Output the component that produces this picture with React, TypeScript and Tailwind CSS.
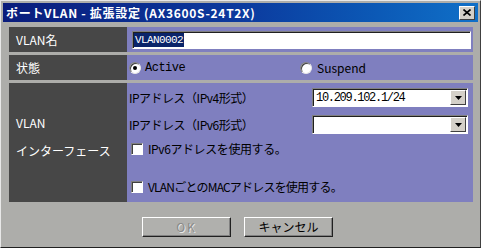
const font = "font-['Noto_Sans_CJK_JP','Noto_Sans',sans-serif]";

function Radio({ checked }: { checked?: boolean }) {
  return (
    <span className="relative inline-block w-[12px] h-[12px] rounded-full bg-white border border-t-[#808080] border-l-[#808080] border-r-[#e8e8e8] border-b-[#e8e8e8] shadow-[inset_1px_1px_0_#404040]">
      {checked && <span className="absolute left-[3px] top-[3px] w-[4px] h-[4px] rounded-full bg-black" />}
    </span>
  );
}

function Check() {
  return (
    <span className="inline-block w-[12px] h-[12px] bg-white border border-t-[#808080] border-l-[#808080] border-r-white border-b-white shadow-[inset_1px_1px_0_#404040]" />
  );
}

function Combo({ value }: { value?: string }) {
  return (
    <div className="w-[156px] h-[19px] flex bg-white border border-t-[#808080] border-l-[#808080] border-r-white border-b-white shadow-[inset_1px_1px_0_#202020]">
      <span className="flex-1 pl-[3px] pt-[1px] text-[12px] leading-[16px] font-['Liberation_Mono',monospace] tracking-[-1.3px]">{value}</span>
      <span className="w-[16px] h-[15px] mt-[1px] mr-[1px] bg-[#d4d0c8] border border-t-white border-l-white border-r-[#404040] border-b-[#404040] flex items-center justify-center">
        <svg width="7" height="4" viewBox="0 0 7 4"><path d="M0 0h7L3.5 4z" fill="#000" /></svg>
      </span>
    </div>
  );
}

export default function App() {
  return (
    <div className={`w-[482px] h-[251px] bg-white ${font}`}>
      <div className="w-[481px] h-[248px] bg-[#adadaa] border border-t-[#e8e8e8] border-l-[#e8e8e8] border-r-[#404040] border-b-[#202020] flex flex-col">
        <div className="mx-[2px] mt-[2px] h-[19px] bg-gradient-to-r from-[#0a1c7c] via-[#0c3a9e] to-[#1070c8] flex items-center justify-between pl-[3px] pr-[3px]">
          <span className="text-white text-[12px] font-bold leading-none tracking-[0.7px]">ポートVLAN - 拡張設定 (AX3600S-24T2X)</span>
          <span className="w-[16px] h-[14px] bg-[#d4d0c8] border border-t-white border-l-white border-r-[#404040] border-b-[#404040] flex items-center justify-center">
            <svg width="8" height="7" viewBox="0 0 8 7"><path d="M0.5 0.5l7 6M7.5 0.5l-7 6" stroke="#000" strokeWidth="1.6" /></svg>
          </span>
        </div>

        <div className="ml-[8px] mt-[5px] w-[464px] flex flex-col gap-[3px] text-[12px]">
          <div className="h-[25px] flex">
            <div className="w-[118px] bg-[#474747] text-white pl-[7px] flex items-center">VLAN名</div>
            <div className="flex-1 bg-[#7f7fbf] flex items-center pl-[5px]">
              <div className="w-[339px] h-[18px] bg-white border border-t-[#808080] border-l-[#808080] border-r-white border-b-white shadow-[inset_1px_1px_0_#202020] flex items-center pl-[1px]">
                <span className="bg-[#0a246a] text-white text-[11px] leading-[14px] px-[1px] font-['Liberation_Mono',monospace] tracking-[-0.6px]">VLAN0002</span>
              </div>
            </div>
          </div>

          <div className="h-[25px] flex">
            <div className="w-[118px] bg-[#474747] text-white pl-[7px] flex items-center">状態</div>
            <div className="flex-1 bg-[#7f7fbf] flex items-center pl-[2px]">
              <label className="flex items-center gap-[4px] w-[171px]">
                <Radio checked />
                <span className="font-['Liberation_Mono',monospace] text-[12px] tracking-[-0.5px]">Active</span>
              </label>
              <label className="flex items-center gap-[5px]">
                <Radio />
                <span>Suspend</span>
              </label>
            </div>
          </div>

          <div className="h-[119px] flex">
            <div className="w-[118px] bg-[#474747] text-white pl-[7px] flex flex-col justify-center gap-[10px] pb-[11px]">
              <span className="leading-[18px]">VLAN</span>
              <span className="leading-[18px]">インターフェース</span>
            </div>
            <div className="flex-1 bg-[#7f7fbf] pl-[2px] pr-[5px] pt-[5px] flex flex-col tracking-[-0.5px]">
              <div className="h-[19px] flex items-center justify-between">
                <span>IPアドレス（IPv4形式）</span>
                <Combo value="10.209.102.1/24" />
              </div>
              <div className="h-[19px] mt-[8px] flex items-center justify-between">
                <span>IPアドレス（IPv6形式）</span>
                <Combo />
              </div>
              <label className="mt-[6px] flex items-center gap-[5px] pl-[2px]">
                <Check />
                <span className="tracking-[-0.4px]">IPv6アドレスを使用する。</span>
              </label>
              <label className="mt-[20px] flex items-center gap-[5px] pl-[2px]">
                <Check />
                <span className="tracking-[-0.8px]">VLANごとのMACアドレスを使用する。</span>
              </label>
            </div>
          </div>
        </div>

        <div className="mt-[15px] flex justify-center gap-[13px] pr-[6px]">
          <button className="w-[89px] h-[20px] bg-[#b0b0ad] border border-t-white border-l-white border-r-[#202020] border-b-[#202020] shadow-[inset_-1px_-1px_0_#808080] text-[12px] text-[#8a8a88] [text-shadow:1px_1px_0_#e8e8e8] tracking-[2px]">OK</button>
          <button className="w-[89px] h-[20px] bg-[#b0b0ad] border border-t-white border-l-white border-r-[#202020] border-b-[#202020] shadow-[inset_-1px_-1px_0_#808080] text-[12px] text-black">キャンセル</button>
        </div>
      </div>
    </div>
  );
}
